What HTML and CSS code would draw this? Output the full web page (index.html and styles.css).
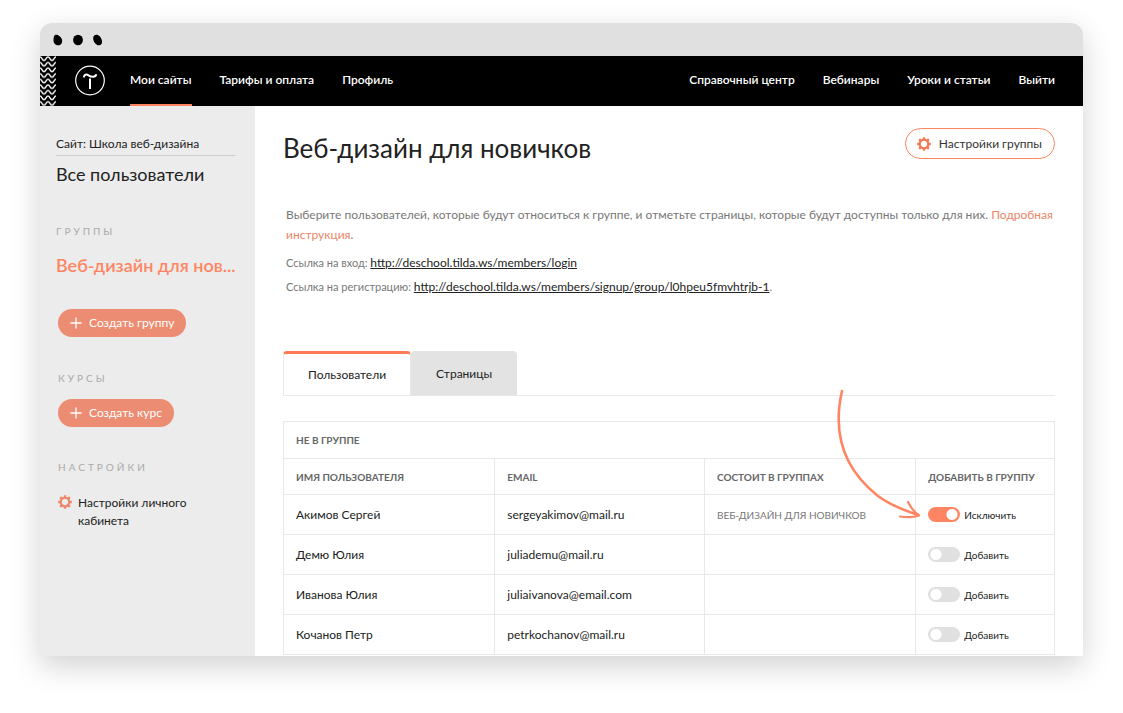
FILE: index.html
```
<!DOCTYPE html>
<html lang="ru">
<head>
<meta charset="utf-8">
<title>Веб-дизайн для новичков</title>
<link rel="stylesheet" href="styles.css">
</head>
<body>
<svg class="defs" width="0" height="0" aria-hidden="true">
  <symbol id="gear" viewBox="-8 -8 16 16">
    <circle r="4.3" fill="none" stroke="currentColor" stroke-width="2.2"/>
    <path d="M0-4.800V-6.800M0 4.800V6.800M-4.800 0H-6.800M4.800 0H6.800M3.400-3.400L4.800-4.800M-3.400 3.400L-4.800 4.800M-3.400-3.400L-4.800-4.800M3.400 3.400L4.800 4.800" stroke="currentColor" stroke-width="2.4"/>
  </symbol>
  <symbol id="plus" viewBox="0 0 12 12"><path d="M6 .5V11.5M.5 6H11.5" stroke="currentColor" stroke-width="1.3"/></symbol>
</svg>
<div class="window">
  <div class="titlebar">
    <svg width="52" height="14" viewBox="0 0 52 14" aria-hidden="true">
      <path d="M3 2C5 1 8.500 3 9.800 6C11 9.500 9 12.500 6.200 12.300C3 12.200 1.300 9.500 1.500 6.500C1.600 4.500 2 2.600 3 2Z"/>
      <ellipse cx="26" cy="7" rx="4.9" ry="5.2"/>
      <path d="M44 1.800C46.500 1.400 49 4 49.800 7C50.600 10 49.500 12.200 47.200 12.300C44 12.400 41.500 9 41.200 6C41 3.600 42 2.100 44 1.800Z"/>
    </svg>
  </div>
  <header class="topbar">
    <svg class="waves" width="16" height="50" viewBox="0 0 16 50" aria-hidden="true">
      <defs><pattern id="wave" width="8" height="5.600" patternUnits="userSpaceOnUse"><path d="M-4 4.400C-2 4.400-2 1 0 1S2 4.400 4 4.400S6 1 8 1S10 4.400 12 4.400" fill="none" stroke="#fff" stroke-width="1.400"/></pattern></defs>
      <rect width="16" height="50" fill="url(#wave)"/>
    </svg>
    <a class="logo" href="#" aria-label="Tilda">
      <svg width="32" height="32" viewBox="0 0 32 32" fill="none" stroke="#fff">
        <circle cx="16" cy="15.500" r="14.300" stroke-width="1.200"/>
        <path d="M9.800 12.400C10 9.300 12.500 9 14.500 10.300C17 12 21.500 12.800 22.300 9.200M16 13.500V24" stroke-width="2"/>
      </svg>
    </a>
    <nav class="nav">
      <a class="active" href="#">Мои сайты</a>
      <a href="#">Тарифы и оплата</a>
      <a href="#">Профиль</a>
    </nav>
    <nav class="nav nav-right">
      <a href="#">Справочный центр</a>
      <a href="#">Вебинары</a>
      <a href="#">Уроки и статьи</a>
      <a href="#">Выйти</a>
    </nav>
  </header>
  <div class="body">
    <aside class="sidebar">
      <a class="site" href="#">Сайт: Школа веб-дизайна</a>
      <a class="all" href="#">Все пользователи</a>
      <h2 class="label">Группы</h2>
      <a class="group" href="#">Веб-дизайн для нов...</a>
      <button class="pill create-group" type="button"><svg width="12" height="12"><use href="#plus"/></svg>Создать группу</button>
      <h2 class="label label-inset courses">Курсы</h2>
      <button class="pill" type="button"><svg width="12" height="12"><use href="#plus"/></svg>Создать курс</button>
      <h2 class="label label-inset prefs">Настройки</h2>
      <a class="account" href="#"><svg width="16" height="16"><use href="#gear"/></svg><span>Настройки личного кабинета</span></a>
    </aside>
    <main class="main">
      <div class="heading">
        <h1>Веб-дизайн для новичков</h1>
        <button class="settings" type="button"><svg width="16" height="16"><use href="#gear"/></svg>Настройки группы</button>
      </div>
      <div class="intro">
        <p class="lead">Выберите пользователей, которые будут относиться к группе, и отметьте страницы, которые будут доступны только для них. <a class="more" href="#">Подробная инструкция</a>.</p>
        <p class="link-row">Ссылка на вход: <a href="#">http://deschool.tilda.ws/members/login</a></p>
        <p class="link-row">Ссылка на регистрацию: <a href="#">http://deschool.tilda.ws/members/signup/group/l0hpeu5fmvhtrjb-1</a>.</p>
      </div>
      <div class="tabs" role="tablist">
        <button class="tab selected" type="button" role="tab" aria-selected="true">Пользователи</button>
        <button class="tab" type="button" role="tab" aria-selected="false">Страницы</button>
      </div>
      <div class="table-area">
        <table>
          <colgroup><col class="c-name"><col class="c-email"><col class="c-groups"><col class="c-add"></colgroup>
          <thead>
            <tr class="caption-row"><th colspan="4">Не в группе</th></tr>
            <tr class="head-row"><th>Имя пользователя</th><th>Email</th><th>Состоит в группах</th><th>Добавить в группу</th></tr>
          </thead>
          <tbody>
            <tr><td>Акимов Сергей</td><td>sergeyakimov@mail.ru</td><td class="member">Веб-дизайн для новичков</td><td><label class="switch"><input type="checkbox" checked>Исключить</label></td></tr>
            <tr><td>Демю Юлия</td><td>juliademu@mail.ru</td><td></td><td><label class="switch"><input type="checkbox">Добавить</label></td></tr>
            <tr><td>Иванова Юлия</td><td>juliaivanova@email.com</td><td></td><td><label class="switch"><input type="checkbox">Добавить</label></td></tr>
            <tr><td>Кочанов Петр</td><td>petrkochanov@mail.ru</td><td></td><td><label class="switch"><input type="checkbox">Добавить</label></td></tr>
          </tbody>
        </table>
        <svg class="arrow" width="90" height="136" viewBox="0 0 90 136" fill="none" stroke="#ff8562" stroke-linecap="round" stroke-linejoin="round" aria-hidden="true">
          <path d="M7 3C-3 47 10 82 43 108C55 117 68 122 83 127" stroke-width="2.600"/>
          <path d="M73 114C76 120 79 124 84 127.500C77 130 71 129.500 65 128.500" stroke-width="2.200"/>
        </svg>
      </div>
    </main>
  </div>
</div>
</body>
</html>
```
FILE: styles.css
```
* { box-sizing: border-box; }
body {
  margin: 0;
  padding: 23px 40px 57px;
  background: #fff;
  color: #222;
  font: 12px/18px Lato, "Liberation Sans", sans-serif;
}
h1, h2, p { margin: 0; font-weight: 400; }
a { color: inherit; text-decoration: none; }
button { font: inherit; cursor: pointer; }
svg { display: block; flex: none; }
.defs { position: absolute; }

.window {
  overflow: hidden;
  border-radius: 12px 12px 0 0;
  background: #fff;
  box-shadow: 0 10px 30px rgba(0, 0, 0, .18);
}
.titlebar { height: 33px; padding: 10px 12px; background: #e0e0e0; }

.topbar { display: flex; height: 50px; background: #000; color: #fff; }
.logo { padding: 9px 0 0 18px; }
.nav { display: flex; gap: 28px; padding-left: 24px; font-weight: 600; line-height: 47px; white-space: nowrap; }
.nav a { height: 50px; }
.nav .active { border-bottom: 2px solid #ff8562; }
.nav-right { margin-left: auto; padding: 0 28px 0 0; }

.body { display: flex; }
.sidebar { flex: 0 0 215px; min-width: 0; padding: 29px 20px 0 16px; background: #ececec; }
.site { display: block; padding-bottom: 2px; border-bottom: 1px solid #ccc; line-height: 18px; }
.all { display: block; margin-top: 6px; font-size: 18px; line-height: 24px; }
.label { margin-top: 36px; color: #aaa; font-size: 10px; line-height: 18px; letter-spacing: 3px; text-transform: uppercase; }
.label-inset { padding-left: 2px; }
.group { display: block; margin-top: 13px; color: #ff8562; font-size: 18px; font-weight: 600; line-height: 24px; white-space: nowrap; }
.pill { display: flex; align-items: center; gap: 7px; height: 28px; margin: 12px 0 0 2px; padding: 0 12px; border: 0; border-radius: 14px; background: #ec8c72; color: #fff; }
.create-group { margin-top: 32px; }
.courses { margin-top: 32px; }
.prefs { margin-top: 31px; }
.account { display: flex; gap: 5px; margin-top: 18px; padding-right: 16px; }
.account svg { margin-left: 1px; color: #ed866a; }

.main { flex: 1; min-width: 0; padding: 22px 28px 1px; }
.heading { display: flex; justify-content: space-between; align-items: flex-start; }
h1 { font-size: 26px; line-height: 40px; }
.settings { display: flex; align-items: center; gap: 7px; height: 31px; padding: 0 12px 0 10px; border: 1px solid #ff8562; border-radius: 16px; background: #fff; color: #333; }
.settings svg { color: #f47757; }
.intro { margin-right: -12px; padding: 37px 0 0 3px; color: #777; }
.lead { line-height: 20px; }
.more { color: #ec8568; }
.link-row { margin-top: 5px; font-size: 11px; line-height: 19px; }
.lead + .link-row { margin-top: 8px; }
.link-row a { color: #222; font-size: 12px; text-decoration: underline; }

.tabs { display: flex; margin-top: 55px; border-bottom: 1px solid #e8e8e8; }
.tab { height: 44px; padding: 2px 25px 0; border: 0; border-radius: 4px 4px 0 0; background: #e3e3e3; color: #222; }
.selected { padding: 0 24px; border: solid #e8e8e8; border-width: 3px 1px 0; border-top-color: #ff7a55; background: #fff; }

.table-area { position: relative; margin-top: 25px; }
table { width: 100%; table-layout: fixed; border-collapse: collapse; }
.c-name { width: 27.4%; }
.c-email { width: 27.2%; }
.c-groups { width: 27.4%; }
th, td { padding: 0 12px; border: 1px solid #e8e8e8; text-align: left; white-space: nowrap; }
td { height: 40px; }
th { color: #666; font-size: 10px; font-weight: 700; text-transform: uppercase; }
.caption-row th { height: 37px; }
.head-row th { height: 36px; }
.member { color: #777; font-size: 10px; text-transform: uppercase; }
.switch { display: flex; align-items: center; gap: 4px; font-size: 10px; }
.switch input { appearance: none; width: 32px; height: 15px; margin: 0; border-radius: 8px; background: radial-gradient(circle at 8px 50%, #fff 5px, #e0e0e0 6px); }
.switch input:checked { background: radial-gradient(circle at 24px 50%, #fff 5px, #ff8562 6px); }
.arrow { position: absolute; right: 130px; top: -33px; pointer-events: none; }
```
